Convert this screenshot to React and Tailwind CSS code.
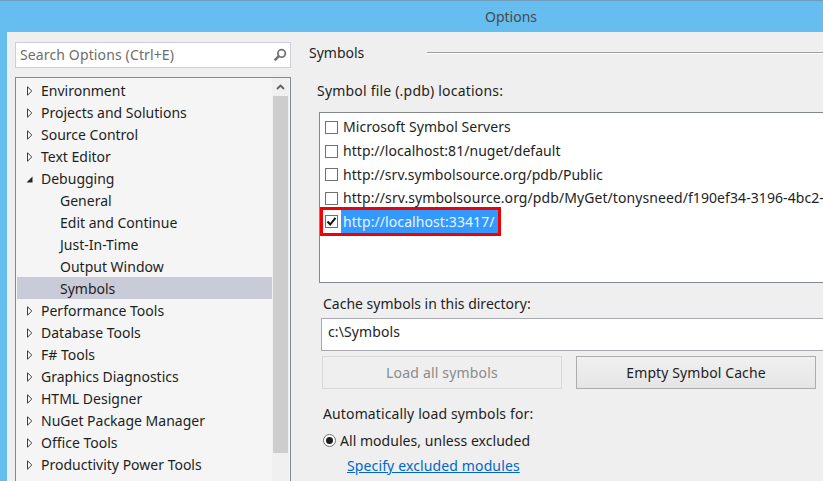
import React from "react";

function Arrow({ open }) {
  if (open) {
    return (
      <svg width="7" height="9" viewBox="0 0 7 9" className="block">
        <path d="M0.5 7.5 L6.5 7.5 L6.5 1.5 Z" fill="#262626" />
      </svg>
    );
  }
  return (
    <svg width="7" height="10" viewBox="0 0 7 10" className="block">
      <path d="M1.5 0.8 L5.8 5 L1.5 9.2 Z" fill="#fff" stroke="#3c3c3c" strokeWidth="1" />
    </svg>
  );
}

function TreeRow({ label, open, child, selected }) {
  return (
    <div className={"flex h-[22px] items-center pt-[2px] " + (selected ? "bg-[#cacbd9]" : "")}>
      {child ? <div className="w-[43px] shrink-0" /> : (
        <div className="flex w-[24px] shrink-0 justify-center pl-[1px]">
          <Arrow open={open} />
        </div>
      )}
      <span className="whitespace-nowrap">{label}</span>
    </div>
  );
}

function Check({ checked }) {
  return (
    <span className="flex h-[13px] w-[13px] shrink-0 items-center justify-center border border-[#707070] bg-white">
      {checked && (
        <svg width="11" height="11" viewBox="0 0 11 11">
          <path d="M1.5 5.5 L4.2 8.5 L9.5 1.8" fill="none" stroke="#111" strokeWidth="2" />
        </svg>
      )}
    </span>
  );
}

function ListRow({ label, short, wide }) {
  return (
    <div className={"flex items-center whitespace-nowrap pl-[5px] " + (short ? "h-[23px]" : "h-[24px]")}>
      <Check />
      <span className={"ml-[5px] " + (wide ? "tracking-[0.08px]" : "tracking-[0.04px]")}>{label}</span>
    </div>
  );
}

const before = [
  ["Environment"], ["Projects and Solutions"], ["Source Control"], ["Text Editor"],
  ["Debugging", true],
];
const children = ["General", "Edit and Continue", "Just-In-Time", "Output Window"];
const after = [
  "Performance Tools", "Database Tools", "F# Tools", "Graphics Diagnostics", "HTML Designer",
  "NuGet Package Manager", "Office Tools", "Productivity Power Tools",
];

export default function App() {
  return (
    <div className="flex h-[481px] w-[823px] flex-col overflow-hidden bg-[#66bdf0] font-['Noto_Sans','Open_Sans',sans-serif] text-[14px] leading-[20px] text-[#1e1e1e]">
      <div className="flex h-[32px] shrink-0 items-center justify-center border-t border-[#6f9bbd] pt-[1px] pl-[199px] text-[#4a4a4a]">
        Options
      </div>
      <div className="ml-[7px] flex min-h-0 flex-1 bg-[#efefef]">
        <div className="flex w-[284px] shrink-0 flex-col pl-[8px] pt-[10px]">
          <div className="flex h-[26px] w-[276px] shrink-0 items-center justify-between border border-[#cccedb] bg-white pl-[4px] pr-[3px] text-[#6d6d6d]">
            <span className="tracking-[0.13px]">Search Options (Ctrl+E)</span>
            <svg width="14" height="14" viewBox="0 0 14 14">
              <circle cx="8.6" cy="5.4" r="3.7" fill="none" stroke="#717171" strokeWidth="1.8" />
              <path d="M5.8 8.2 L1.6 12.4" stroke="#717171" strokeWidth="2.4" />
            </svg>
          </div>
          <div className="mt-[9px] flex h-[420px] w-[276px] shrink-0 border border-[#828790] bg-[#f5f5f5] pl-[1px]">
            <div className="w-[255px] shrink-0 pt-[1px]">
              {before.map(([l, o]) => <TreeRow key={l} label={l} open={o} />)}
              {children.map((l) => <TreeRow key={l} label={l} child />)}
              <TreeRow label="Symbols" child selected />
              {after.map((l) => <TreeRow key={l} label={l} />)}
            </div>
            <div className="flex h-full w-[17px] flex-col bg-[#f0f0f0]">
              <div className="flex h-[18px] items-center justify-center">
                <svg width="9" height="6" viewBox="0 0 9 6">
                  <path d="M1 5 L4.5 1.5 L8 5" fill="none" stroke="#606060" strokeWidth="1.8" />
                </svg>
              </div>
              <div className="mx-[1px] h-[357px] bg-[#cdcdcd]" />
            </div>
          </div>
        </div>

        <div className="min-w-0 flex-1 pl-[18px]">
          <div className="mt-[11px] flex h-[20px] items-center">
            <span className="w-[118px] shrink-0">Symbols</span>
            <div className="h-[2px] flex-1 border-t border-[#a0a0a0] bg-white" />
          </div>
          <div className="mt-[18px] h-[20px] pl-[8px] tracking-[0.2px]">Symbol file (.pdb) locations:</div>
          <div className="ml-[10px] mt-[11px] h-[171px] overflow-hidden border border-r-0 border-[#828790] bg-white pt-[2px]">
            <ListRow label="Microsoft Symbol Servers" />
            <ListRow label="http://localhost:81/nuget/default" />
            <ListRow label="http://srv.symbolsource.org/pdb/Public" short />
            <ListRow label="http://srv.symbolsource.org/pdb/MyGet/tonysneed/f190ef34-3196-4bc2-" wide />
            <div className="-mt-[3px] flex h-[29px] w-[181px] items-center border-[3px] border-[#f00000] bg-white pl-[2px]">
              <Check checked />
              <span className="ml-[3px] flex h-[23px] flex-1 items-center bg-[#3399ff] pl-[2px] tracking-[0.08px] text-[#eaf4ff]">http://localhost:33417/</span>
            </div>
          </div>
          <div className="mt-[11px] h-[20px] pl-[14px]">Cache symbols in this directory:</div>
          <div className="ml-[12px] mt-[4px] flex h-[33px] items-center border border-r-0 border-[#a9a9b1] bg-white pb-[5px] pl-[6px] tracking-[0.1px]">c:\Symbols</div>
          <div className="ml-[13px] mt-[5px] flex gap-[14px]">
            <div className="flex h-[33px] w-[240px] items-center justify-center border border-[#d9d9d9] bg-[#efefef] tracking-[0.18px] text-[#8a8a8a]">Load all symbols</div>
            <div className="flex h-[33px] w-[240px] items-center justify-center border border-[#acacac] bg-gradient-to-b from-[#f0f0f0] to-[#e5e5e5] tracking-[0.1px]">Empty Symbol Cache</div>
          </div>
          <div className="mt-[15px] h-[20px] pl-[14px] tracking-[0.13px]">Automatically load symbols for:</div>
          <div className="mt-[6px] flex h-[20px] items-center pl-[14px]">
            <span className="flex h-[13px] w-[13px] items-center justify-center rounded-full border border-[#707070] bg-white">
              <span className="h-[7px] w-[7px] rounded-full bg-[#1e1e1e]" />
            </span>
            <span className="ml-[4px] pt-[2px] tracking-[0.04px]">All modules, unless excluded</span>
          </div>
          <div className="mt-[6px] h-[20px] pl-[38px] tracking-[0.13px] text-[#0066cc] underline">Specify excluded modules</div>
        </div>
      </div>
    </div>
  );
}
